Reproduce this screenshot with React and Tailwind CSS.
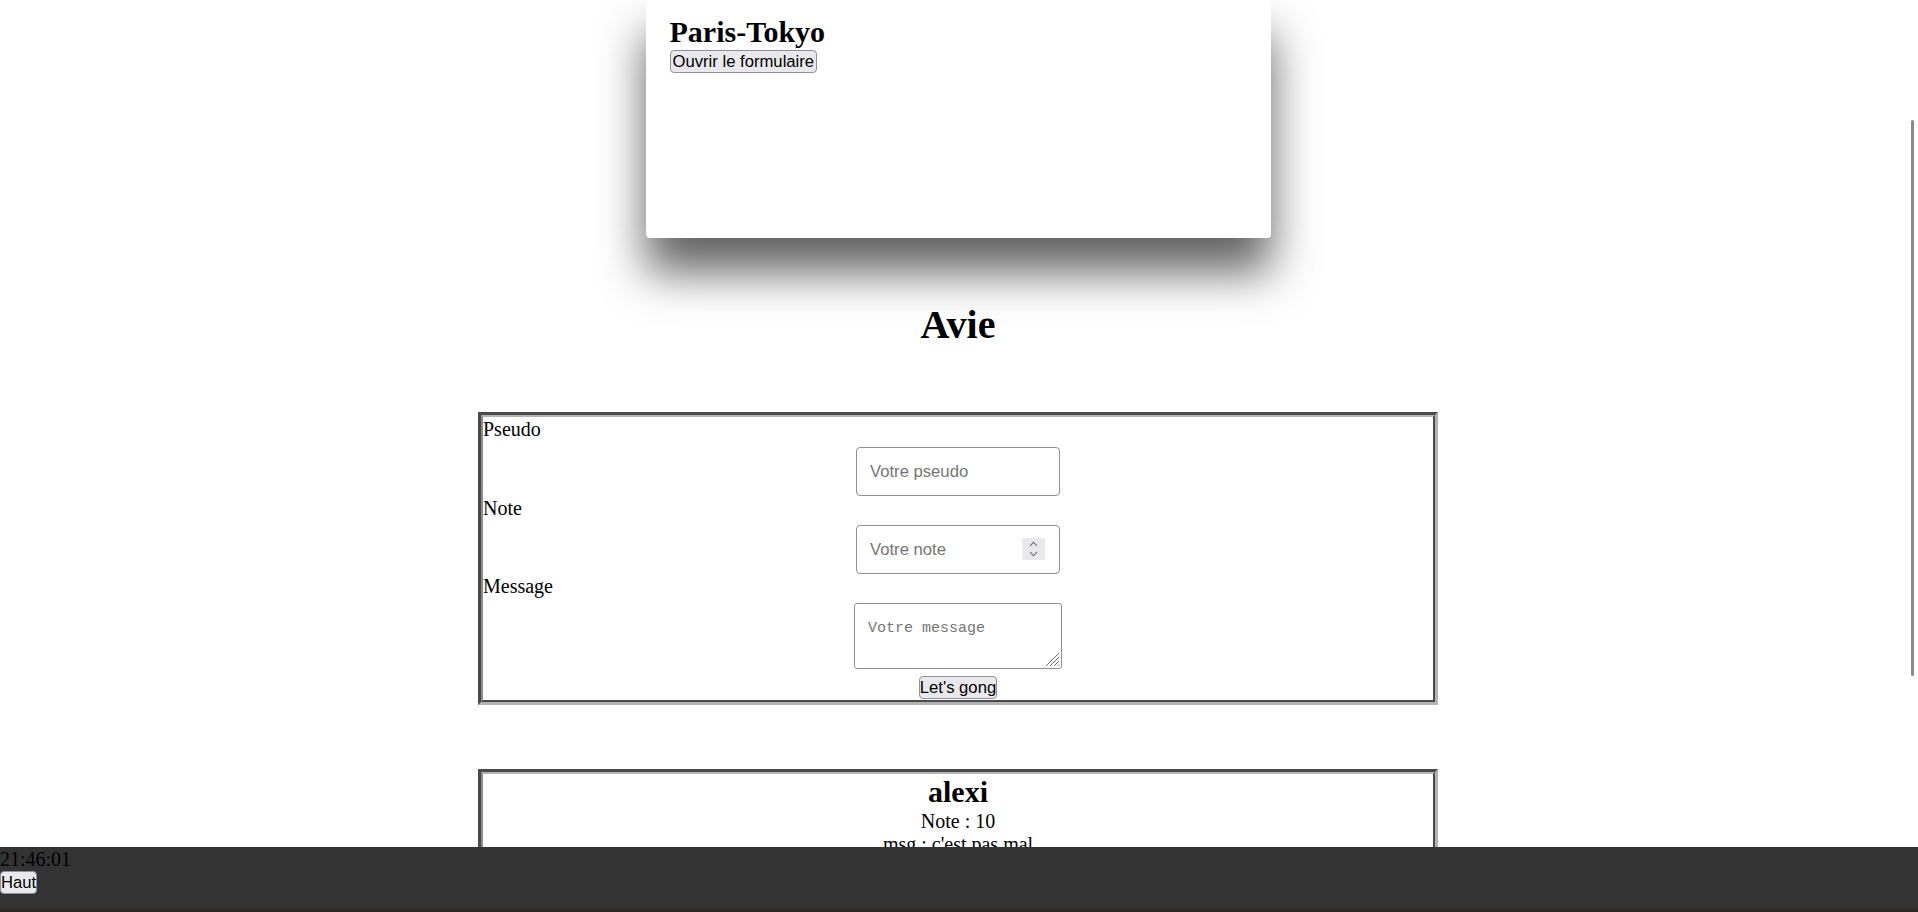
export default function App() {
  const btn =
    "border border-[#8f8f9d] bg-[#e9e9ed] rounded-[4px] py-[1px] font-['Liberation_Sans',Arial,sans-serif] text-[16.67px] leading-[19px] text-black";
  const field =
    "block w-full rounded-[4px] border border-[#8f8f9d] bg-white pl-[13px] font-['Liberation_Sans',Arial,sans-serif] text-[16.67px] text-black outline-none placeholder:text-[#757575]";
  const line = "block pt-[2px] leading-[21px]";
  return (
    <div className="relative h-screen overflow-hidden bg-white font-['Liberation_Serif','Times_New_Roman',serif] text-[20px] leading-[23px] text-black">
      <div className="pr-[2px]">
        {/* Header card */}
        <div className="mx-auto h-[238px] w-[625px] rounded-b-[4px] bg-white px-[24px] pt-[15px] shadow-[0_34px_46px_rgba(0,0,0,0.62)]">
          <h2 className="text-[30px] font-bold leading-[34px]">Paris-Tokyo</h2>
          <button className={btn + " px-[2px]"}>Ouvrir le formulaire</button>
        </div>

        <h1 className="mb-[64px] mt-[64px] text-center text-[40px] font-bold leading-[46px]">Avie</h1>

        {/* Form */}
        <div className="mx-auto w-[960px] border-[3px] border-b-[#b3b3b3] border-l-[#4a4a4a] border-r-[#b3b3b3] border-t-[#4a4a4a]">
          <form className="border-2 border-b-[#4a4a4a] border-l-[#8c8c8c] border-r-[#4a4a4a] border-t-[#b3b3b3] pb-[1px]">
            <label className={line}>Pseudo</label>
            <div className="mx-auto mt-[7px] w-[204px]">
              <input type="text" placeholder="Votre pseudo" className={field + " h-[49px]"} />
            </div>
            <label className={line}>Note</label>
            <div className="relative mx-auto mt-[6px] w-[204px]">
              <input type="text" placeholder="Votre note" className={field + " h-[49px]"} />
              <span className="absolute right-[15px] top-[13px] flex h-[22px] w-[23px] flex-col items-center justify-center gap-[4px] bg-[#e9e9ed]">
                <svg width="9" height="6" viewBox="0 0 9 6" fill="none" stroke="#5f5f6b" strokeWidth="1.1">
                  <path d="M1 5 L4.5 1.2 L8 5" />
                </svg>
                <svg width="9" height="6" viewBox="0 0 9 6" fill="none" stroke="#5f5f6b" strokeWidth="1.1">
                  <path d="M1 1 L4.5 4.8 L8 1" />
                </svg>
              </span>
            </div>
            <label className={line}>Message</label>
            <div className="relative mx-auto mt-[6px] w-[208px]">
              <textarea
                placeholder="Votre message"
                className="block h-[66px] w-full resize-none rounded-[3px] border border-[#8f8f9d] bg-white px-[13px] pt-[16px] font-['Liberation_Mono','DejaVu_Sans_Mono',monospace] text-[15px] leading-[17px] text-black outline-none placeholder:text-[#757575]"
              />
              <svg
                className="pointer-events-none absolute bottom-[2px] right-[2px]"
                width="16"
                height="16"
                viewBox="0 0 16 16"
                fill="none"
                stroke="#6e6e76"
                strokeWidth="1"
              >
                <path d="M15 2 L2 15" />
                <path d="M15 6 L6 15" />
                <path d="M15 10 L10 15" />
                <path d="M15 13.5 L13.5 15" />
              </svg>
            </div>
            <button type="button" className={btn + " mx-auto mt-[7px] block px-0"}>
              Let's gong
            </button>
          </form>
        </div>

        {/* Review */}
        <div className="mx-auto mt-[64px] w-[960px] border-[3px] border-b-[#b3b3b3] border-l-[#4a4a4a] border-r-[#b3b3b3] border-t-[#4a4a4a]">
          <div className="border-2 border-b-[#4a4a4a] border-l-[#8c8c8c] border-r-[#4a4a4a] border-t-[#b3b3b3] pb-[2px] text-center">
            <h2 className="pt-[1px] text-[30px] font-bold leading-[34px]">alexi</h2>
            <p className={line}>Note : 10</p>
            <p className={line}>msg : c'est pas mal</p>
          </div>
        </div>
      </div>

      {/* Overlay scrollbar */}
      <div className="absolute right-[4px] top-[120px] h-[556px] w-[3px] rounded-full bg-[#8a8a8a]" />

      {/* Footer */}
      <footer className="absolute bottom-0 left-0 right-0 flex h-[65px] flex-col bg-[#333333]">
        <div className="flex-1">
          <div className={line}>21:46:01</div>
          <button className={btn + " mt-[1px] block px-0"}>Haut</button>
        </div>
        <div className="h-[3px] bg-[#2a2724]" />
      </footer>
    </div>
  );
}
